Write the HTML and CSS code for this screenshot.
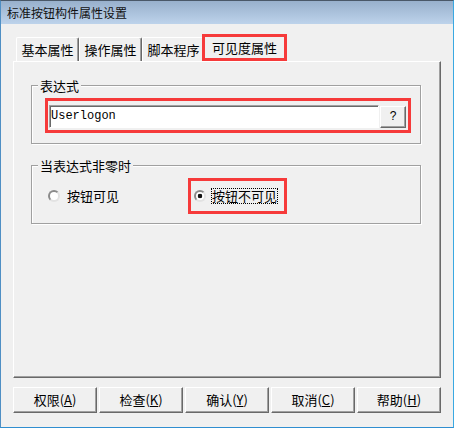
FILE: index.html
```html
<!DOCTYPE html>
<html lang="zh-CN">
<head>
<meta charset="utf-8">
<title>标准按钮构件属性设置</title>
<link rel="stylesheet" href="styles.css">
</head>
<body>
<div class="window">
  <div class="titlebar"><span class="title">标准按钮构件属性设置</span></div>
  <div class="client">
    <div class="tabs">
      <div class="tab">基本属性</div>
      <div class="tab">操作属性</div>
      <div class="tab">脚本程序</div>
      <div class="tab tab-active">可见度属性</div>
    </div>
    <div class="panel">
      <fieldset class="group group-expr">
        <legend>表达式</legend>
        <div class="expr-row">
          <div class="input">Userlogon</div>
          <div class="btn-q">?</div>
        </div>
      </fieldset>
      <fieldset class="group group-cond">
        <legend>当表达式非零时</legend>
        <div class="radio-row">
          <div class="radio-item"><span class="radio"></span><span class="radio-label">按钮可见</span></div>
          <div class="radio-mark"><span class="radio checked"></span><span class="radio-label focus">按钮不可见</span></div>
        </div>
      </fieldset>
    </div>
    <div class="buttons">
      <div class="btn">权限(<u>A</u>)</div>
      <div class="btn">检查(<u>K</u>)</div>
      <div class="btn">确认(<u>Y</u>)</div>
      <div class="btn">取消(<u>C</u>)</div>
      <div class="btn">帮助(<u>H</u>)</div>
    </div>
  </div>
</div>
</body>
</html>
```

FILE: styles.css
```css
html, body {
  margin: 0;
  padding: 0;
  background: #f0f0f0;
}

body {
  font-family: "Noto Sans CJK SC", "Noto Sans", sans-serif;
  color: #000;
}

.window {
  width: 454px;
  height: 428px;
  box-sizing: border-box;
  border: 1px solid;
  border-color: #4a5868 #3aa9e2 #2f8ed0 #4f8fc4;
  background: #f0f0f0;
  display: flex;
  flex-direction: column;
}

.titlebar {
  height: 23px;
  flex: none;
  display: flex;
  align-items: center;
  padding-left: 6px;
  background: linear-gradient(#98b0cc, #bdd3eb);
}

.title {
  font-size: 12px;
  line-height: 16px;
  color: #111;
}

.client {
  padding: 10px 12px 0 12px;
}

.tabs {
  display: flex;
  align-items: flex-end;
  height: 27px;
  padding-left: 3px;
}

.tab {
  width: 63px;
  height: 24px;
  box-sizing: border-box;
  border-top: 1px solid #fff;
  border-left: 1px solid #fff;
  border-right: 1px solid #696969;
  box-shadow: inset -1px 0 #a0a0a0;
  border-radius: 2px 2px 0 0;
  font-size: 13px;
  line-height: 23px;
  text-align: center;
  white-space: nowrap;
}

.tab-active {
  width: 85px;
  height: 27px;
  margin-left: -3px;
  border: 3px solid #f63a3a;
  border-radius: 0;
  box-shadow: none;
  line-height: 21px;
  position: relative;
  z-index: 1;
}

.panel {
  height: 317px;
  box-sizing: border-box;
  border: 1px solid;
  border-color: #fff #696969 #696969 #fff;
  box-shadow: inset -1px -1px #a0a0a0;
  padding: 16px 0 0 17px;
}

.group {
  margin: 0;
  padding: 0;
  width: 390px;
  min-width: 0;
  box-sizing: border-box;
  border: 1px solid #a0a0a0;
  box-shadow: inset 1px 1px #fff, 1px 1px #fff;
}

.group legend {
  margin-left: 6px;
  padding: 0 2px;
  font-size: 13px;
  line-height: 15px;
  background: #f0f0f0;
}

.group-cond {
  margin-top: 14px;
}

.expr-row {
  display: flex;
  align-items: flex-start;
  width: 366px;
  box-sizing: border-box;
  margin: 5px 0 10px 13px;
  border: 3px solid #f63a3a;
  padding: 4px 1px 2px 1px;
}

.input {
  width: 330px;
  height: 23px;
  box-sizing: border-box;
  background: #fff;
  border: 1px solid;
  border-color: #a0a0a0 #fff #fff #a0a0a0;
  box-shadow: inset 1px 1px #696969;
  padding-left: 1px;
  font-family: "Liberation Mono", monospace;
  font-size: 12px;
  line-height: 20px;
}

.btn-q {
  width: 26px;
  height: 22px;
  margin: 1px 0 0 1px;
  box-sizing: border-box;
  border: 1px solid;
  border-color: #fff #696969 #696969 #fff;
  box-shadow: inset -1px -1px #a0a0a0;
  font-family: "Liberation Sans", sans-serif;
  font-size: 12px;
  line-height: 19px;
  text-align: center;
}

.radio-row {
  display: flex;
  align-items: center;
  margin: 5px 0 9px 16px;
}

.radio-item {
  width: 140px;
  display: flex;
  align-items: center;
  gap: 7px;
}

.radio-mark {
  display: flex;
  align-items: center;
  gap: 5px;
  border: 3px solid #f63a3a;
  padding: 7px 6px 7px 3px;
}

.radio {
  width: 12px;
  height: 12px;
  flex: none;
  box-sizing: border-box;
  border-radius: 50%;
  border: 2px solid;
  border-color: #8a8a8a #e2e2e2 #e2e2e2 #8a8a8a;
  background: #fff;
}

.radio.checked {
  background: radial-gradient(circle, #111 0 2px, #fff 2.6px);
}

.radio-label {
  font-size: 13px;
  line-height: 14px;
  white-space: nowrap;
}

.focus {
  border: 1px dotted #000;
}

.buttons {
  display: flex;
  gap: 2px;
  margin-top: 9px;
}

.btn {
  width: 84px;
  height: 26px;
  box-sizing: border-box;
  border: 1px solid;
  border-color: #fff #696969 #696969 #fff;
  box-shadow: inset -1px -1px #a0a0a0;
  display: flex;
  align-items: center;
  justify-content: center;
  font-size: 13px;
  line-height: 16px;
  white-space: nowrap;
}

.btn u {
  text-decoration: underline;
  text-underline-offset: 1px;
}
```
